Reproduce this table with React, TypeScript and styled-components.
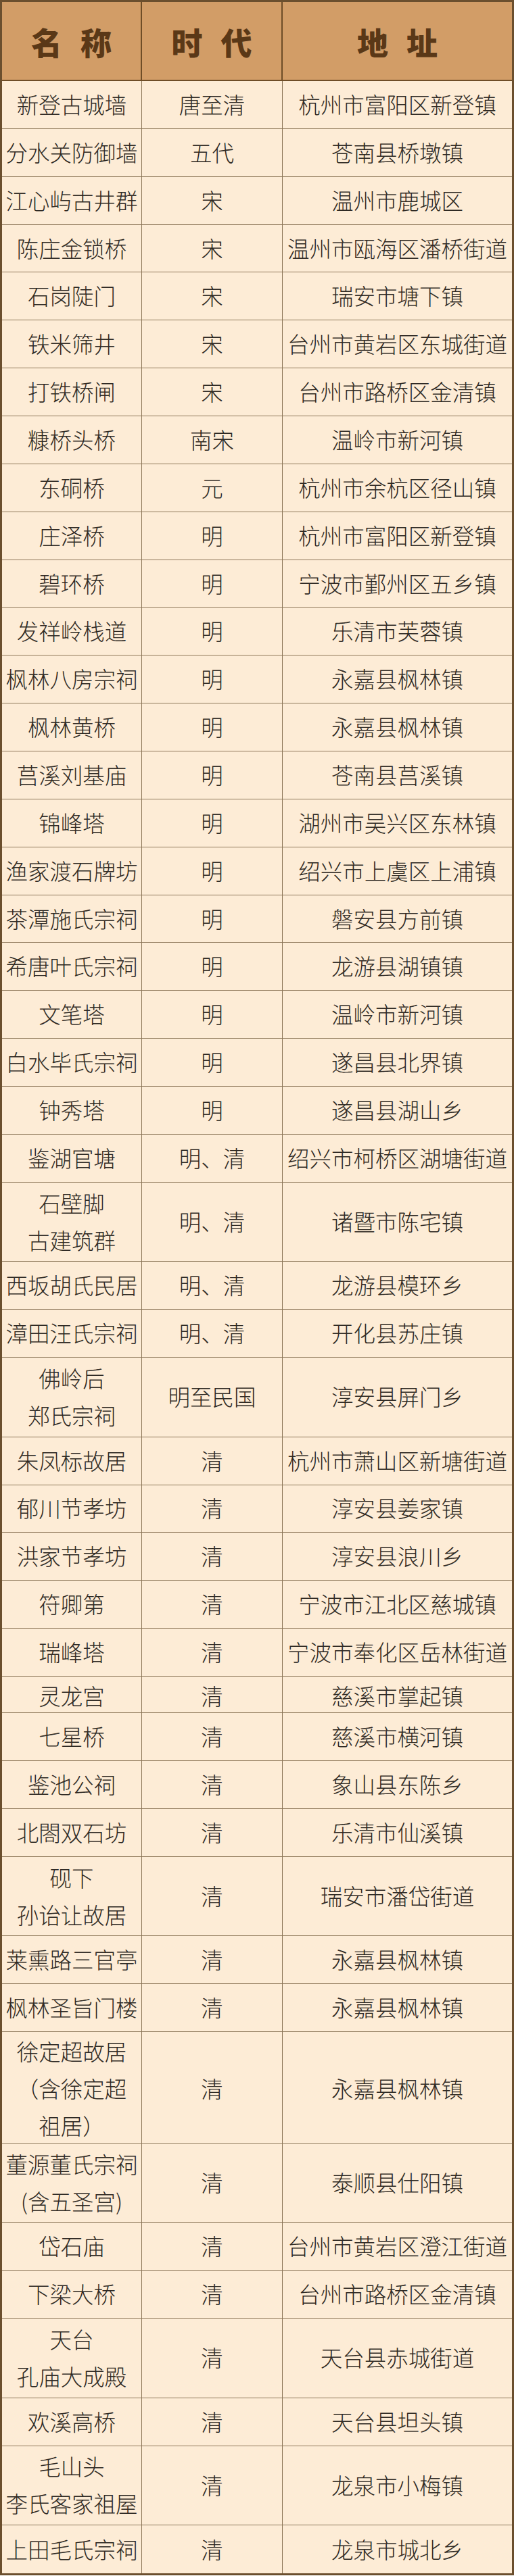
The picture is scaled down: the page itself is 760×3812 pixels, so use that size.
import React from "react";
import styled, { createGlobalStyle } from "styled-components";

const GlobalStyle = createGlobalStyle`
  html, body {
    margin: 0;
    padding: 0;
    background: #ffffff;
  }
  body {
    font-family: "Noto Sans CJK SC", "Noto Sans", sans-serif;
  }
`;

const COLS = "207px 208px 1fr";
const LINE = "#8c7658";
const HEAD_LINE = "#6e4d27";

const Table = styled.div`
  width: 760px;
  box-sizing: border-box;
  border: 3px solid #6b4f2e;
  background: #fdecd6;
`;

const HeaderRow = styled.div`
  display: grid;
  grid-template-columns: ${COLS};
  height: 117px;
  box-sizing: border-box;
  background: #d29d67;
  border-bottom: 2px solid ${HEAD_LINE};
`;

const HeaderCell = styled.div<{ $last?: boolean }>`
  display: flex;
  align-items: center;
  justify-content: center;
  box-sizing: border-box;
  border-right: ${(p) => (p.$last ? "none" : `2px solid ${HEAD_LINE}`)};
  font-family: "Noto Sans CJK SC", sans-serif;
  font-weight: 900;
  font-size: 46px;
  color: #5a3817;
  letter-spacing: 27px;
  padding-left: 27px;
  white-space: nowrap;
`;

const Row = styled.div<{ $h: number; $last?: boolean }>`
  display: grid;
  grid-template-columns: ${COLS};
  height: ${(p) => p.$h}px;
  box-sizing: border-box;
  border-bottom: ${(p) => (p.$last ? "none" : `1px solid ${LINE}`)};
`;

const Cell = styled.div<{ $last?: boolean }>`
  display: flex;
  align-items: center;
  justify-content: center;
  box-sizing: border-box;
  text-align: center;
  white-space: pre-line;
  border-right: ${(p) => (p.$last ? "none" : `1px solid ${LINE}`)};
  font-family: "Noto Sans CJK SC", sans-serif;
  font-size: 32.5px;
  font-weight: 300;
  line-height: 55px;
  color: #2f2a24;
  padding-bottom: 3px;
`;

const N = 70.87;
const T = 117.6;
const X = 164.6;
const S = 54.3;

type Item = [string, string, string, number];

const rows: Item[] = [
  ["新登古城墙", "唐至清", "杭州市富阳区新登镇", N],
  ["分水关防御墙", "五代", "苍南县桥墩镇", N],
  ["江心屿古井群", "宋", "温州市鹿城区", N],
  ["陈庄金锁桥", "宋", "温州市瓯海区潘桥街道", N],
  ["石岗陡门", "宋", "瑞安市塘下镇", N],
  ["铁米筛井", "宋", "台州市黄岩区东城街道", N],
  ["打铁桥闸", "宋", "台州市路桥区金清镇", N],
  ["糠桥头桥", "南宋", "温岭市新河镇", N],
  ["东硐桥", "元", "杭州市余杭区径山镇", N],
  ["庄泽桥", "明", "杭州市富阳区新登镇", N],
  ["碧环桥", "明", "宁波市鄞州区五乡镇", N],
  ["发祥岭栈道", "明", "乐清市芙蓉镇", N],
  ["枫林八房宗祠", "明", "永嘉县枫林镇", N],
  ["枫林黄桥", "明", "永嘉县枫林镇", N],
  ["莒溪刘基庙", "明", "苍南县莒溪镇", N],
  ["锦峰塔", "明", "湖州市吴兴区东林镇", N],
  ["渔家渡石牌坊", "明", "绍兴市上虞区上浦镇", N],
  ["茶潭施氏宗祠", "明", "磐安县方前镇", N],
  ["希唐叶氏宗祠", "明", "龙游县湖镇镇", N],
  ["文笔塔", "明", "温岭市新河镇", N],
  ["白水毕氏宗祠", "明", "遂昌县北界镇", N],
  ["钟秀塔", "明", "遂昌县湖山乡", N],
  ["鉴湖官塘", "明、清", "绍兴市柯桥区湖塘街道", N],
  ["石壁脚\n古建筑群", "明、清", "诸暨市陈宅镇", T],
  ["西坂胡氏民居", "明、清", "龙游县模环乡", N],
  ["漳田汪氏宗祠", "明、清", "开化县苏庄镇", N],
  ["佛岭后\n郑氏宗祠", "明至民国", "淳安县屏门乡", T],
  ["朱凤标故居", "清", "杭州市萧山区新塘街道", N],
  ["郁川节孝坊", "清", "淳安县姜家镇", N],
  ["洪家节孝坊", "清", "淳安县浪川乡", N],
  ["符卿第", "清", "宁波市江北区慈城镇", N],
  ["瑞峰塔", "清", "宁波市奉化区岳林街道", N],
  ["灵龙宫", "清", "慈溪市掌起镇", S],
  ["七星桥", "清", "慈溪市横河镇", N],
  ["鉴池公祠", "清", "象山县东陈乡", N],
  ["北閤双石坊", "清", "乐清市仙溪镇", N],
  ["砚下\n孙诒让故居", "清", "瑞安市潘岱街道", T],
  ["莱熏路三官亭", "清", "永嘉县枫林镇", N],
  ["枫林圣旨门楼", "清", "永嘉县枫林镇", N],
  ["徐定超故居\n（含徐定超\n祖居）", "清", "永嘉县枫林镇", X],
  ["董源董氏宗祠\n(含五圣宫)", "清", "泰顺县仕阳镇", T],
  ["岱石庙", "清", "台州市黄岩区澄江街道", N],
  ["下梁大桥", "清", "台州市路桥区金清镇", N],
  ["天台\n孔庙大成殿", "清", "天台县赤城街道", T],
  ["欢溪高桥", "清", "天台县坦头镇", N],
  ["毛山头\n李氏客家祖屋", "清", "龙泉市小梅镇", T],
  ["上田毛氏宗祠", "清", "龙泉市城北乡", N],
];

export default function App() {
  return (
    <>
      <GlobalStyle />
      <Table>
        <HeaderRow>
          <HeaderCell>名称</HeaderCell>
          <HeaderCell>时代</HeaderCell>
          <HeaderCell $last>地址</HeaderCell>
        </HeaderRow>
        {rows.map(([name, era, addr, h], i) => (
          <Row key={i} $h={h} $last={i === rows.length - 1}>
            <Cell>{name}</Cell>
            <Cell>{era}</Cell>
            <Cell $last>{addr}</Cell>
          </Row>
        ))}
      </Table>
    </>
  );
}
